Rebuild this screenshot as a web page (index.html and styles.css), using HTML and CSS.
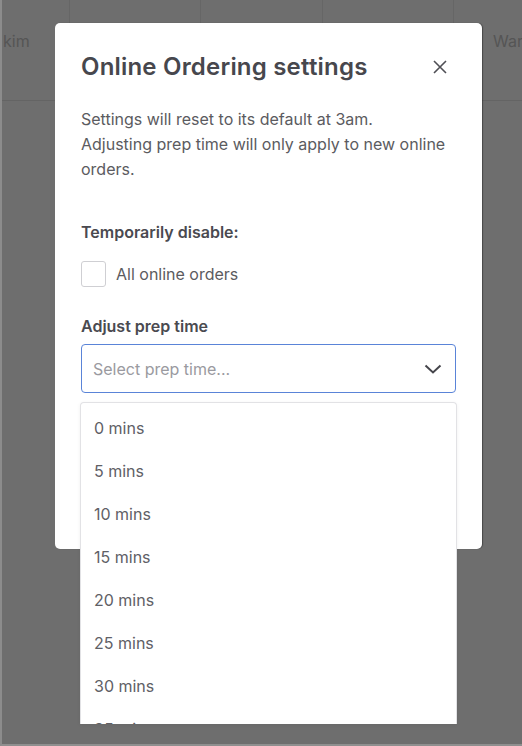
FILE: index.html
```html
<!DOCTYPE html>
<html lang="en">
<head>
    <meta charset="UTF-8">
    <meta name="viewport" content="width=device-width, initial-scale=1.0">
    <title>Online Ordering settings</title>
    <link rel="stylesheet" href="styles.css">
</head>
<body>
    <div class="page">
        <div class="table-head">
            <div class="cell cell-1">kim</div>
            <div class="cell cell-2"></div>
            <div class="cell cell-3"></div>
            <div class="cell cell-4"></div>
            <div class="cell cell-5">War</div>
        </div>

        <div class="modal">
            <div class="modal-header">
                <h1>Online Ordering settings</h1>
                <button type="button" class="close-button" aria-label="Close">
                    <svg width="14" height="14" viewBox="0 0 14 14">
                        <path d="M1 1 L13 13 M13 1 L1 13" stroke="#4f4f55" stroke-width="1.6" fill="none"/>
                    </svg>
                </button>
            </div>
            <p class="intro">Settings will reset to its default at 3am.<br>Adjusting prep time will only apply to new online orders.</p>

            <div class="form-group">
                <label class="group-label">Temporarily disable:</label>
                <label class="check-row">
                    <span class="checkbox"></span>
                    <span>All online orders</span>
                </label>
            </div>

            <div class="form-group">
                <label class="group-label">Adjust prep time</label>
                <div class="select-wrap">
                    <div class="select">
                        <span class="placeholder">Select prep time...</span>
                        <svg width="18" height="10" viewBox="0 0 18 10">
                            <path d="M1.5 1.5 L9 8.5 L16.5 1.5" stroke="#45454b" stroke-width="2" fill="none"/>
                        </svg>
                    </div>
                    <ul class="options">
                        <li>0 mins</li>
                        <li>5 mins</li>
                        <li>10 mins</li>
                        <li>15 mins</li>
                        <li>20 mins</li>
                        <li>25 mins</li>
                        <li>30 mins</li>
                        <li>35 mins</li>
                    </ul>
                </div>
            </div>
        </div>
    </div>
</body>
</html>
```

FILE: styles.css
```css
body {
    margin: 0;
    padding: 0;
    font-family: Inter, "Liberation Sans", sans-serif;
    background-color: #6e6e6e;
    overflow: hidden;
}
.page {
    position: relative;
    height: 744px;
    border-left: 2px solid #8c8c8c;
    border-bottom: 2px solid #8f8f8f;
}
.table-head {
    display: flex;
    height: 100px;
    border-bottom: 1px solid #646464;
}
.cell {
    border-right: 1px solid #666;
    color: #555;
    font-size: 16px;
    line-height: 82px;
    white-space: nowrap;
    overflow: hidden;
}
.cell-1 { width: 66px; padding-left: 1px; }
.cell-2 { width: 130px; }
.cell-3 { width: 121px; }
.cell-4 { width: 130px; }
.cell-5 { flex: 1; padding-left: 39px; border-right: none; }

.modal {
    position: absolute;
    left: 53px;
    top: 23px;
    width: 375px;
    height: 497px;
    padding: 29px 26px 0;
    background: #fff;
    border-radius: 5px;
    box-shadow: 1px 0 1px rgba(0, 0, 0, 0.35);
}
.modal-header {
    display: flex;
    justify-content: space-between;
    align-items: center;
}
.modal-header h1 {
    margin: 0;
    font-size: 24px;
    line-height: 30px;
    font-weight: 600;
    color: #47474d;
    letter-spacing: 0.2px;
}
.close-button {
    border: none;
    background: none;
    padding: 0;
    margin-right: 9px;
    display: flex;
    cursor: pointer;
}
.intro {
    margin: 25px 0 0;
    font-size: 16px;
    line-height: 25px;
    color: #5b5b60;
}
.form-group {
    margin-top: 39px;
}
.form-group + .form-group {
    margin-top: 28px;
}
.group-label {
    display: block;
    font-size: 16px;
    line-height: 22px;
    font-weight: 600;
    color: #4a4a50;
}
.check-row {
    display: flex;
    align-items: center;
    gap: 10px;
    margin-top: 18px;
    font-size: 16px;
    color: #5b5b60;
}
.checkbox {
    width: 23px;
    height: 24px;
    border: 1px solid #cfcfd3;
    border-radius: 3px;
}
.select-wrap {
    position: relative;
    margin-top: 7px;
}
.select {
    display: flex;
    justify-content: space-between;
    align-items: center;
    height: 47px;
    padding: 0 13px 0 11px;
    border: 1.5px solid #5a84d8;
    border-radius: 4px;
}
.placeholder {
    font-size: 16px;
    color: #9a9aa0;
}
.options {
    position: absolute;
    left: -1px;
    right: -1px;
    top: 58px;
    height: 317px;
    margin: 0;
    padding: 4px 0 0;
    list-style: none;
    overflow: hidden;
    background: #fff;
    border: 1px solid #e2e2e5;
    border-bottom: none;
    border-radius: 4px 4px 0 0;
    box-shadow: 0 1px 4px rgba(0, 0, 0, 0.06);
}
.options li {
    height: 43px;
    line-height: 43px;
    padding-left: 13px;
    font-size: 16px;
    color: #606066;
}
```
